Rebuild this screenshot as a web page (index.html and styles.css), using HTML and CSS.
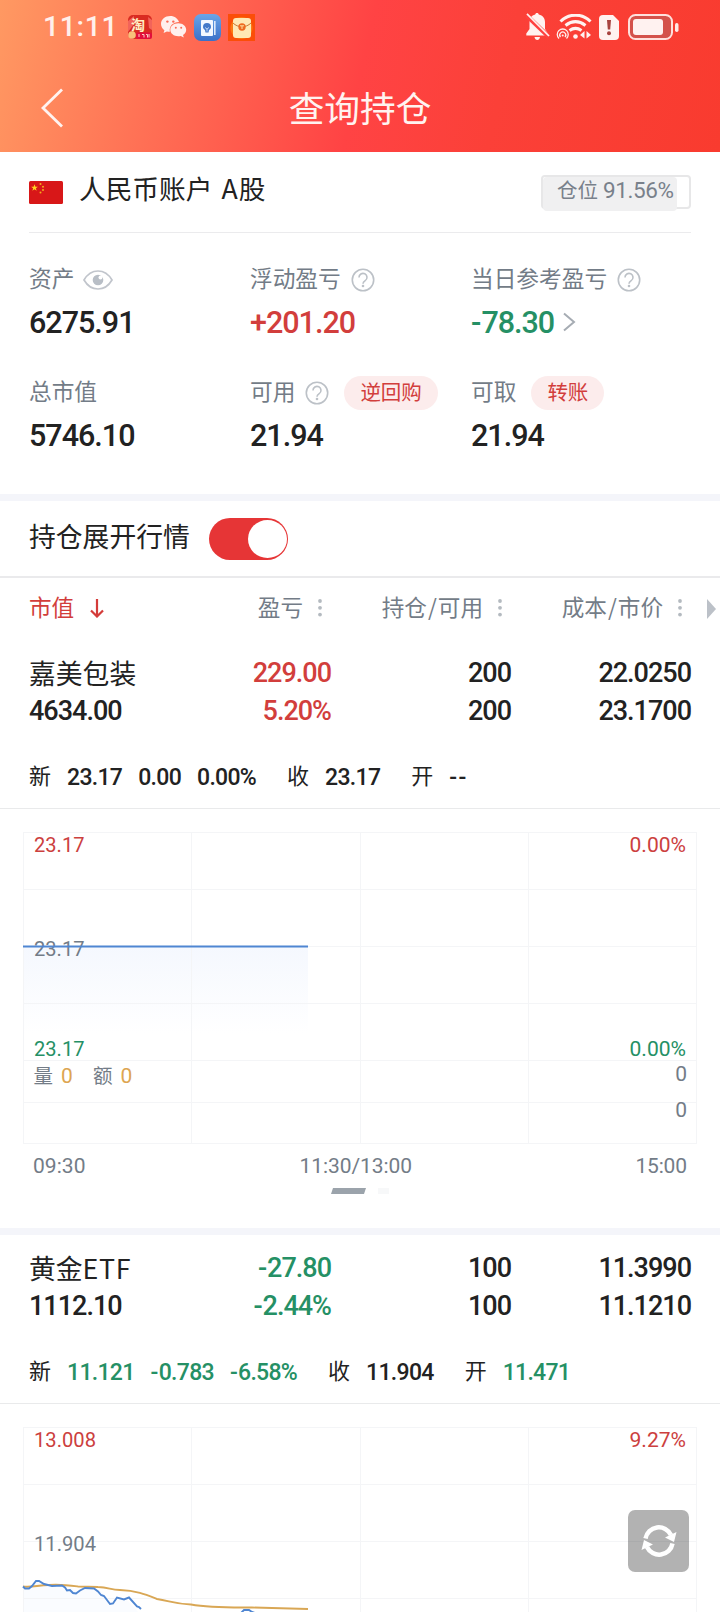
FILE: index.html
```html
<!DOCTYPE html>
<html lang="zh-CN">
<head>
<meta charset="utf-8">
<title>查询持仓</title>
<link rel="stylesheet" href="styles.css">
</head>
<body>
<svg class="defs" width="0" height="0">
  <symbol id="help" viewBox="0 0 24 24">
    <circle cx="12" cy="12" r="10.7" fill="none" stroke="#bcc1c7" stroke-width="1.6"/>
    <path d="M8 9.5a4 4 0 1 1 6.2 3.2c-1.4.9-2.2 1.500-2.200 3" fill="none" stroke="#bcc1c7" stroke-width="1.6"/>
    <circle cx="12" cy="18" r="1.300" fill="#bcc1c7"/>
  </symbol>
  <symbol id="dots" viewBox="0 0 4 18">
    <circle cx="2" cy="2" r="1.900" fill="#b4bac0"/><circle cx="2" cy="8.800" r="1.900" fill="#b4bac0"/><circle cx="2" cy="15.600" r="1.900" fill="#b4bac0"/>
  </symbol>
  <symbol id="grid" viewBox="0 0 720 340">
    <path d="M23 23.500H697M23 80.500H697M23 137.500H697M23 194.500H697M23 251.500H697M23 293.500H697M23 334.500H697M23.500 23V335M191.500 23V335M360.500 23V335M528.500 23V335M696.500 23V335" fill="none" stroke="#f4f5f7"/>
  </symbol>
</svg>

<div class="screen">
  <header class="top">
    <div class="status">
      <div class="status-left">
        <span class="clock">11:11</span>
        <svg class="app-taobao" width="24" height="24" viewBox="0 0 24 24">
          <rect width="24" height="24" rx="5" fill="#d92b22"/>
          <path d="M0 6L6 1v8L0 17zM20 2l4 3v10l-3-2z" fill="#f2645a"/>
          <text x="3" y="14.500" class="tao">淘</text>
          <circle cx="4" cy="20" r="3.800" fill="#f8c07a"/>
          <rect x="8" y="17.500" width="16" height="6.500" rx="2" fill="#e20e3c"/>
          <path d="M11 19v3M14 19.500h2v3M18 19.500h1.500v3M21 19v3.500" stroke="#ffc9c0" fill="none"/>
        </svg>
        <svg class="app-wechat" width="26" height="22" viewBox="0 0 26 22" fill="#fff0ee">
          <path d="M9.300 0C4 0 0 3.500 0 8c0 2.600 1.300 4.700 3.400 6.200L2.600 17l3.300-1.600c1 .3 2 .4 3 .4C7.800 10.300 12 6.200 18 6.100 17 2.600 13.600 0 9.300 0z"/>
          <path d="M17.300 7.200c-4.500 0-8 2.900-8 6.500s3.500 6.500 8 6.500c.9 0 1.700-.1 2.500-.3l3 1.700-.8-2.600c2-1.300 3.200-3.200 3.200-5.300 0-3.600-3.500-6.500-7.900-6.500z"/>
          <g fill="#fb6a55"><circle cx="6.400" cy="5.600" r="1.200"/><circle cx="12.300" cy="5.600" r="1.200"/><circle cx="14.800" cy="11.800" r="1"/><circle cx="20.200" cy="11.800" r="1"/></g>
        </svg>
        <svg class="app-card" width="27" height="27" viewBox="0 0 27 27">
          <defs><linearGradient id="blue" x2="0" y2="1"><stop stop-color="#6aa5e8"/><stop offset="1" stop-color="#3a70c8"/></linearGradient></defs>
          <rect width="27" height="27" rx="7" fill="url(#blue)"/>
          <rect x="7" y="6" width="12" height="16" rx="1" fill="#f3f8ff"/>
          <path d="M20.800 7v14" stroke="#dce9fb" stroke-width="1.600"/>
          <path d="M13 9a4 4 0 0 0-4 4c0 1.600 1 2.300 2 3l.5 2.500h3L15 16c1-.7 2-1.400 2-3a4 4 0 0 0-4-4z" fill="#4479c9"/>
          <path d="M11 13.500l2 1.500 2-1.500M13 15v2.500" stroke="#bcd5f5" fill="none"/>
        </svg>
        <svg class="app-packet" width="27" height="27" viewBox="0 0 27 27">
          <rect width="27" height="27" fill="#fb4e08"/>
          <circle cx="13.500" cy="14" r="11" fill="#fc7912"/>
          <rect x="5" y="4" width="18" height="20" rx="3" fill="#ffe8b5"/>
          <path d="M5 9c5 5 13 5 18 0" stroke="#c77a35" fill="none"/>
          <circle cx="14" cy="13" r="3.700" fill="#ee6a20"/>
          <path d="M12 11.800h4M14 12v3" stroke="#ffe2a4" fill="none"/>
        </svg>
      </div>
      <div class="status-right">
        <svg width="24" height="28" viewBox="0 0 24 28">
          <path d="M11 0c1 0 1.700.6 1.800 1.500 4 .9 6.200 4 6.200 7.700V16l3 4.500v2H.3v-2L3.500 16V9.200c0-3.700 2-6.800 5.700-7.700C9.300.6 10 0 11 0zM8.500 24h5.500c-.3 1.900-1.300 3-2.700 3s-2.500-1.100-2.800-3z" fill="#fff2f0"/>
          <path d="M0 1.800l23 22" stroke="#ff4140" stroke-width="4.500"/>
          <path d="M1 .8l22 22.200" stroke="#fff2f0" stroke-width="1.700"/>
        </svg>
        <svg class="wifi" width="36" height="26" viewBox="0 0 36 26" fill="none" stroke="#fff2f0">
          <path d="M4.500 7.500C13-1 26-1 34.500 7.500" stroke-width="3"/>
          <path d="M9.500 11.500c6.500-5 13.500-5 20 0" stroke-width="3"/>
          <path d="M13.500 16.500c4-2.800 8-2.800 12 0" stroke-width="3"/>
          <circle cx="19.500" cy="22.500" r="2.300" fill="#fff2f0" stroke="none"/>
          <path d="M3 24.500a5.500 5.500 0 1 1 7.500 0M4.500 23a3 3 0 1 1 4.500 0" stroke-width="1.300"/>
          <circle cx="6.700" cy="21.500" r="1" fill="#fff2f0" stroke="none"/>
          <path d="M28.500 17v7.500l-4.500-3.500zM30.500 17v7.500l4.500-3.500z" fill="#fff2f0" stroke="none"/>
        </svg>
        <svg class="sim" width="20" height="25" viewBox="0 0 20 25">
          <path d="M4 0h10l6 6v15a4 4 0 0 1-4 4H4a4 4 0 0 1-4-4V4a4 4 0 0 1 4-4z" fill="#fff2f0"/>
          <path d="M8 5h4l-.8 9.500H8.800z" fill="#a8433f"/><circle cx="10" cy="18.300" r="2" fill="#a8433f"/>
        </svg>
        <svg class="battery" width="51" height="26" viewBox="0 0 51 26">
          <rect x="1" y="1" width="43" height="24" rx="6.500" fill="#d4524b" stroke="#ffe0dc" stroke-width="2"/>
          <rect x="5" y="5" width="30" height="16" rx="3" fill="#fff2f0"/>
          <rect x="47" y="9" width="3.500" height="9" rx="1.700" fill="#ffe7e4"/>
        </svg>
      </div>
    </div>
    <nav class="nav">
      <svg class="back" width="23" height="40" viewBox="0 0 23 40"><path d="M21 1.500L2 20l19 18.500" fill="none" stroke="#fff3f0" stroke-width="2.800"/></svg>
      <h1 class="title">查询持仓</h1>
    </nav>
  </header>

  <section class="summary">
    <div class="account">
      <svg class="flag" width="34" height="23" viewBox="0 0 34 23">
        <rect width="34" height="23" rx="1.500" fill="#d81718"/>
        <path d="M5.500 3.300l.9 2.400h2.500l-2 1.600.7 2.500-2.100-1.500-2.100 1.500.7-2.500-2-1.600h2.500z" fill="#ffd51f"/>
        <g fill="#f5ad1c"><circle cx="11.500" cy="3" r="1"/><circle cx="14" cy="5.700" r="1"/><circle cx="14" cy="9" r="1"/><circle cx="11.500" cy="11.600" r="1"/></g>
      </svg>
      <span class="account-name">人民币账户 <span class="latin">A</span>股</span>
      <span class="ratio"><span class="ratio-fill"></span><span class="ratio-text">仓位 <b class="ratio-num">91.56%</b></span></span>
    </div>
    <div class="metrics">
      <div class="metric">
        <div class="label">资产<svg class="eye" width="30" height="20" viewBox="0 0 30 20"><path d="M1 10C8-2 22-2 29 10 22 22 8 22 1 10z" fill="none" stroke="#c1c5cc" stroke-width="1.700"/><circle cx="15" cy="10" r="5.300" fill="#b8bec6"/><circle cx="17.500" cy="7.500" r="2" fill="#fff"/></svg></div>
        <div class="value">6275.91</div>
      </div>
      <div class="metric">
        <div class="label">浮动盈亏<svg class="help"><use href="#help"/></svg></div>
        <div class="value red">+201.20</div>
      </div>
      <div class="metric">
        <div class="label">当日参考盈亏<svg class="help"><use href="#help"/></svg></div>
        <div class="value green"><span class="minus">-</span>78.30<svg class="more" width="13" height="20" viewBox="0 0 13 20"><path d="M1 1.500l10 8.500-10 8.500" fill="none" stroke="#a6acb3" stroke-width="2"/></svg></div>
      </div>
      <div class="metric">
        <div class="label">总市值</div>
        <div class="value">5746.10</div>
      </div>
      <div class="metric">
        <div class="label">可用<svg class="help"><use href="#help"/></svg><span class="pill">逆回购</span></div>
        <div class="value">21.94</div>
      </div>
      <div class="metric">
        <div class="label">可取<span class="pill">转账</span></div>
        <div class="value">21.94</div>
      </div>
    </div>
  </section>

  <div class="band"></div>

  <div class="expand"><span class="expand-label">持仓展开行情</span><span class="switch"><span class="knob"></span></span></div>

  <div class="columns">
    <span class="col-first red">市值<svg class="sort" width="14" height="19" viewBox="0 0 14 19"><path d="M7 0v17M1 11.500l6 6 6-6" fill="none" stroke="#d43c3a" stroke-width="2.200"/></svg></span>
    <span class="col">盈亏<svg class="dots"><use href="#dots"/></svg></span>
    <span class="col">持仓<span class="slash">/</span>可用<svg class="dots"><use href="#dots"/></svg></span>
    <span class="col">成本<span class="slash">/</span>市价<svg class="dots"><use href="#dots"/></svg></span>
    <svg class="scroll-hint" width="10" height="20" viewBox="0 0 10 20"><path d="M1 0l9 10-9 10z" fill="#bcc1c8"/></svg>
  </div>

  <article class="stock">
    <div class="holding">
      <span class="name">嘉美包装</span><span class="num red">229.00</span><span class="num">200</span><span class="num">22.0250</span>
      <span class="num start">4634.00</span><span class="num red">5.20%</span><span class="num">200</span><span class="num">23.1700</span>
    </div>
    <div class="quote">
      <span class="q-label">新</span><b class="q">23.17</b><b class="q">0.00</b><b class="q">0.00%</b>
      <span class="q-label q-gap">收</span><b class="q">23.17</b>
      <span class="q-label q-gap">开</span><b class="q dash">--</b>
    </div>
    <svg class="chart" width="720" height="419" viewBox="0 0 720 419">
      <defs><linearGradient id="area" x2="0" y2="1"><stop stop-color="#f5f8fe"/><stop offset="1" stop-color="#fff"/></linearGradient></defs>
      <rect x="23" y="138" width="285" height="86" fill="url(#area)"/>
      <use href="#grid" width="720" height="340"/>
      <g class="axis">
        <text class="t-red" x="34" y="42.800" textLength="50.500" lengthAdjust="spacingAndGlyphs">23.17</text>
        <text class="t-red" x="686" y="42.800" text-anchor="end" textLength="56.500" lengthAdjust="spacingAndGlyphs">0.00%</text>
        <text x="34" y="146.800" textLength="50.500" lengthAdjust="spacingAndGlyphs">23.17</text>
        <text class="t-green" x="34" y="246.800" textLength="50.500" lengthAdjust="spacingAndGlyphs">23.17</text>
        <text class="t-green" x="686" y="246.800" text-anchor="end" textLength="56.500" lengthAdjust="spacingAndGlyphs">0.00%</text>
        <text class="cjk" x="33.500" y="274">量</text><text class="t-gold" x="61" y="273.800">0</text>
        <text class="cjk" x="93" y="274">额</text><text class="t-gold" x="120.500" y="273.800">0</text>
        <text x="687" y="271.800" text-anchor="end">0</text>
        <text x="687" y="307.800" text-anchor="end">0</text>
        <text x="33" y="363.800" textLength="52.500">09:30</text>
        <text x="299.500" y="363.800" textLength="112.500">11:30/13:00</text>
        <text x="635.500" y="363.800" textLength="51.500">15:00</text>
      </g>
      <path d="M23 137.500H308" stroke="#4f86d2" stroke-width="2"/>
      <path d="M333 379h33l-2 6h-33z" fill="#9ba3ab"/><rect x="378" y="379" width="11" height="6" fill="#f7f8f9"/>
    </svg>
  </article>

  <div class="band"></div>

  <article class="stock next">
    <div class="holding">
      <span class="name">黄金<span class="etf">ETF</span></span><span class="num green"><span class="minus">-</span>27.80</span><span class="num">100</span><span class="num">11.3990</span>
      <span class="num start">1112.10</span><span class="num green"><span class="minus">-</span>2.44%</span><span class="num">100</span><span class="num">11.1210</span>
    </div>
    <div class="quote">
      <span class="q-label">新</span><b class="q green">11.121</b><b class="q green"><span class="minus">-</span>0.783</b><b class="q green"><span class="minus">-</span>6.58%</b>
      <span class="q-label q-gap">收</span><b class="q">11.904</b>
      <span class="q-label q-gap">开</span><b class="q green">11.471</b>
    </div>
    <svg class="chart" width="720" height="208" viewBox="0 0 720 208">
      <path d="M23 183L28 184 37 176 52 181 65 180 76 187 85 185 101 187 110 199 116 194 127 196 138 208H23z" fill="#fafcff"/>
      <use href="#grid" width="720" height="340"/>
      <g class="axis">
        <text class="t-red" x="34" y="42.800" textLength="62" lengthAdjust="spacingAndGlyphs">13.008</text>
        <text class="t-red" x="686" y="42.800" text-anchor="end" textLength="56.500" lengthAdjust="spacingAndGlyphs">9.27%</text>
        <text x="34" y="146.800" textLength="62" lengthAdjust="spacingAndGlyphs">11.904</text>
      </g>
      <g transform="translate(0 9)" fill="none" stroke-width="1.900">
        <path d="M23 173.500C33 174.500 38 172 49 172C60 171 67 172 78 173.500L98 174C109 174 110 177 120 177C137 177.500 147 182 157 186C170 188 175 191 191 191.500C210 195 230 194.500 252 194.500L308 196" stroke="#d9a755"/>
        <path d="M23 173.500l2 2h4l3-2.500 4-5h3l5 3 8 2 10-.5 3 2 2 3 3-.5 3 3 3 .5 4-3 5-2.500 9 .5 4 3 3 3.500 3 1 6 8 3-.5 4-6 7 2 5-2 8 9 2 .5 2 2" stroke="#4f86d2"/>
        <path d="M241 200l3-3h5l3 2 3 1" stroke="#4f86d2"/>
      </g>
    </svg>
  </article>

  <button class="refresh" aria-label="刷新">
    <svg width="36" height="34" viewBox="0 0 36 34">
      <path d="M4.500 14.500A13.500 13.500 0 0 1 30 11M31.500 19.500A13.500 13.500 0 0 1 6 23" fill="none" stroke="#fff" stroke-width="4.500"/>
      <path d="M35.500 8l-2.500 10-9-4.500zM.5 26l2.500-10 9 4.500z" fill="#fff"/>
    </svg>
  </button>
</div>
</body>
</html>
```
FILE: styles.css
```css
* { box-sizing: border-box; }
body { margin: 0; background: #fff; color: #222; font-family: Roboto, "Noto Sans CJK SC", sans-serif; }
svg { display: block; flex: none; }
.defs { position: absolute; }
.screen { position: relative; width: 720px; height: 1612px; overflow: hidden; background: #fff; }
.red { color: #d23e3c; }
.green { color: #259065; }

.top { height: 152px; background: linear-gradient(103deg, #ff9962 0%, #ff7055 23%, #ff4344 50%, #fb4038 69%, #f93b2f 100%); }
.status { display: flex; justify-content: space-between; height: 64px; padding: 0 41px 10px 43px; }
.status-left, .status-right { display: flex; align-items: center; }
.clock { width: 85px; font-size: 28.500px; font-weight: 500; line-height: 54px; letter-spacing: .6px; color: #fff0eb; }
.tao { font: 700 14px "Noto Sans CJK SC", sans-serif; fill: #fff0c4; }
.app-wechat { margin-left: 9px; }
.app-card { margin-left: 7px; }
.app-packet { margin-left: 7px; }
.wifi { margin-left: 6px; }
.sim { margin-left: 7px; }
.battery { margin-left: 9px; }
.nav { display: grid; grid-template-columns: 80px 1fr 80px; align-items: center; height: 88px; }
.back { margin-left: 41px; }
.title { margin: 0; padding-bottom: 3px; font-family: "Noto Sans CJK SC", sans-serif; font-size: 35.700px; font-weight: 400; line-height: 60px; text-align: center; color: #fff3f0; }

.summary { height: 342px; padding: 0 29px; }
.account { display: flex; align-items: center; height: 81px; border-bottom: 1px solid #ebebed; }
.account-name { margin-left: 16px; padding-bottom: 8px; font-family: "Noto Sans CJK SC", sans-serif; font-size: 26.700px; font-weight: 400; line-height: 40px; white-space: nowrap; }
.latin { margin: 0 1px 0 3px; }
.ratio { position: relative; display: flex; align-items: center; width: 150px; height: 34px; margin-left: auto; padding: 0 0 3px 16px; border: 2px solid #e7e7e8; border-radius: 4px; }
.ratio-fill { position: absolute; left: 0; top: 0; width: 134px; height: 34px; border-radius: 4px; background: #f0f0f1; }
.ratio-text { position: relative; font-size: 20.500px; line-height: 26px; white-space: nowrap; color: #79818b; margin-left: -2px; }
.ratio-num { font-size: 22.500px; font-weight: 400; letter-spacing: -.400px; }
.metrics { display: grid; grid-template-columns: 221px 221px 1fr; grid-template-rows: 113px 113px; padding-top: 29px; }
.label { display: flex; align-items: center; height: 36px; padding-bottom: 5px; font-family: "Noto Sans CJK SC", sans-serif; font-size: 22.700px; font-weight: 400; line-height: 31px; white-space: nowrap; color: #737c87; }
.eye { margin-top: 5px; margin-left: 9px; }
.help { width: 24px; height: 24px; margin-top: 5px; margin-left: 10px; }
.value { display: flex; align-items: center; height: 48px; font-size: 30.500px; font-weight: 500; font-stretch: 92%; letter-spacing: -1px; }
.minus { margin-right: 1px; }
.more { margin-left: 9px; }
.pill { height: 34px; margin-top: 5px; margin-left: 15px; padding: 0 16px; border-radius: 17px; background: #fcecec; color: #d23e3c; font-size: 20.500px; line-height: 30px; }

.band { height: 7px; background: #f4f5fa; }
.expand { display: flex; align-items: center; height: 77px; padding: 0 29px; border-bottom: 2px solid #eaeaec; }
.expand-label { padding-bottom: 5px; font-family: "Noto Sans CJK SC", sans-serif; font-size: 26.800px; font-weight: 400; line-height: 40px; }
.switch { display: flex; justify-content: flex-end; width: 79px; height: 42px; margin-left: 19px; padding: 2px 1px; border-radius: 21px; background: #e63536; }
.knob { width: 39px; height: 38px; border-radius: 50%; background: #fff; }

.columns { position: relative; display: grid; grid-template-columns: 122px 180px 180px 180px; height: 60px; padding: 0 29px; font-family: "Noto Sans CJK SC", sans-serif; font-size: 22.600px; font-weight: 400; color: #737c87; }
.col, .col-first { display: flex; align-items: center; padding-bottom: 3px; white-space: nowrap; }
.col { justify-content: flex-end; padding-right: 9px; }
.slash { margin: 0 1px; }
.sort { margin-top: 3px; margin-left: 16px; }
.dots { width: 4px; height: 18px; margin-top: 3px; margin-left: 15px; }
.scroll-hint { position: absolute; right: 4px; top: 21px; }

.stock { padding-top: 17px; }
.stock.next { padding-top: 15px; }
.holding { display: grid; grid-template-columns: 122px 180px 180px 180px; grid-auto-rows: 37.500px; padding: 0 29px; line-height: 37.500px; }
.name { margin-top: -1px; font-family: "Noto Sans CJK SC", sans-serif; font-size: 26.800px; font-weight: 400; white-space: nowrap; }
.etf { letter-spacing: .6px; }
.num { font-size: 27px; font-weight: 500; font-stretch: 92%; letter-spacing: -1px; text-align: right; }
.num.start { text-align: left; }
.quote { display: flex; align-items: center; height: 79px; padding: 16px 29px 0; border-bottom: 1px solid #e9eaeb; }
.q-label { padding-bottom: 5px; font-family: "Noto Sans CJK SC", sans-serif; font-size: 22px; font-weight: 400; line-height: 35px; }
.q-gap { margin-left: 31px; }
.q { margin-left: 16px; font-size: 23px; font-weight: 500; font-stretch: 92%; letter-spacing: -.700px; white-space: nowrap; }
.dash { letter-spacing: 1.500px; }
.axis { font-family: Roboto, sans-serif; font-size: 21px; fill: #737c87; }
.t-red { fill: #cc403e; }
.t-green { fill: #259065; }
.t-gold { fill: #dda551; }
.cjk { font-family: "Noto Sans CJK SC", sans-serif; font-size: 19.500px; }

.refresh { position: absolute; left: 628px; top: 1510px; display: grid; place-items: center; width: 61px; height: 62px; padding: 0; border: 0; border-radius: 7px; background: rgba(0, 0, 0, .3); }
```
